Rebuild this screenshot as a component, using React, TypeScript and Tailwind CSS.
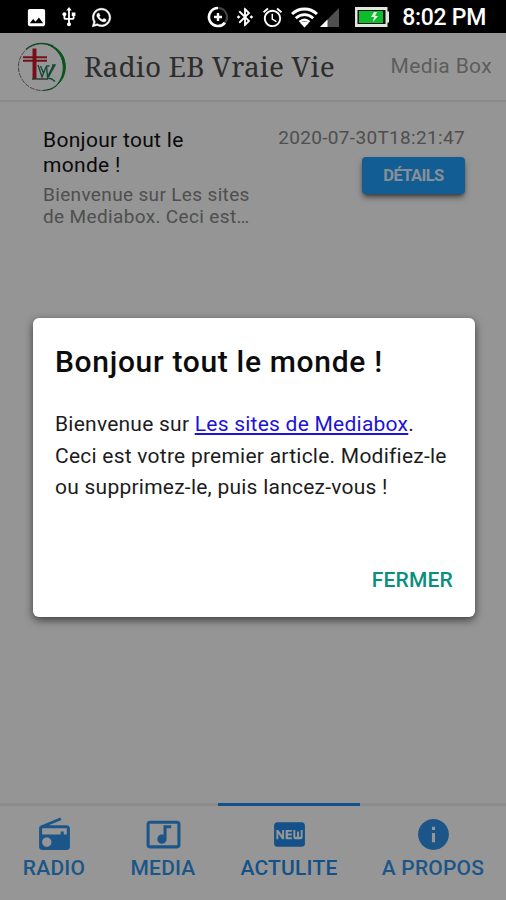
import React from 'react';
import { FaWhatsapp } from 'react-icons/fa';
import {
  MdAlarm,
  MdBluetoothConnected,
  MdFiberNew,
  MdImage,
  MdInfo,
  MdMusicVideo,
  MdRadio,
  MdUsb,
} from 'react-icons/md';

const StatusBar = () => (
  <div className="flex h-[33px] shrink-0 items-center bg-black pr-5 pl-[25px] pt-[1px] text-white">
    <MdImage className="size-[23px]" />
    <MdUsb className="ml-[10px] size-[22px]" />
    <FaWhatsapp className="ml-[11px] size-[21px]" stroke="currentColor" strokeWidth="14" />
    <svg className="ml-[95px] size-[22px]" viewBox="0 0 22 22" fill="none" stroke="currentColor">
      <path d="M11 2a9 9 0 1 0 7 14.6" strokeWidth="2.6" />
      <path d="M11 2a9 9 0 0 1 7 14.6" strokeWidth="2.2" stroke="#444" />
      <path d="M11 7v8M7 11h8" strokeWidth="2.4" />
    </svg>
    <MdBluetoothConnected className="ml-[5px] size-[22px] overflow-visible" />
    <MdAlarm className="ml-[5px] size-[23px]" />
    <svg className="ml-[7px] h-[21px] w-[27px]" viewBox="0 0 27 21" fill="none" stroke="currentColor">
      <path d="M1 7C8 .2 19 .2 26 7" strokeWidth="3" />
      <path d="M4.8 11.3C10 6.5 17 6.5 22.2 11.3" strokeWidth="2.8" />
      <path d="M8.4 14.9C11.5 12.2 15.5 12.2 18.6 14.9" strokeWidth="2.4" />
      <path d="M13.5 20.5L9 15.8c2.4-1.7 6.600-1.7 9 0z" fill="currentColor" stroke="none" />
    </svg>
    <svg className="ml-[2px] size-[19px]" viewBox="0 0 19 19">
      <path d="M19 0v19H0z" fill="#505050" />
      <path d="M7.5 11.5V19H0z" fill="#fff" />
    </svg>
    <svg className="ml-[16px] h-[20px] w-[34px] shrink-0" viewBox="0 0 34 20">
      <path d="M0 0h32.5v4.500h1.500v11h-1.500V20H0z" fill="#e0e6e0" />
      <path d="M2.500 3h28v14h-28z" fill="#111" />
      <path d="M4 4h24v12H4z" fill="#0dbd2b" />
      <path d="M19 5l-3 5h3l-1 5 5-6h-3l2-4z" fill="#e8ffe8" />
    </svg>
    <span className="ml-auto whitespace-nowrap pt-[3px] text-[23px] font-medium tracking-[-0.3px]">8:02 PM</span>
  </div>
);

const Logo = () => (
  <svg className="size-[50px]" viewBox="0 0 50 50" fill="none">
    <path d="M24 1.5a23.5 23.5 0 1 0 2 47" stroke="#777" strokeWidth="1" strokeDasharray="5 1" />
    <path d="M9 7.5C16 1 27-.5 36 4" stroke="#147a3a" strokeWidth="1.5" />
    <path d="M30 2.2C43 5 49 16 48.300 26c-.3 7-3.300 13-9.300 18C45 37 47 30 46 22 45 13 39 6 30 2.2z" fill="#0c8a30" stroke="#0c8a30" />
    <path d="M39 44c-4 3-8 4.500-13 4.500" stroke="#147a3a" strokeWidth="1.2" />
    <path d="M15.500 6.500h4V37h-4z" fill="#c41c2c" />
    <path d="M6 15.300h24M6 18.700h24" stroke="#c41c2c" strokeWidth="2" />
    <path d="M15 37h16" stroke="#4a6a4a" strokeWidth="1.5" />
    <path
      d="M21 23l4 12 4.500-11 1 11 6-12M23.500 24l3 7M29.500 24h3M35 23h3l-6.500 12M30 36.500c4-1 6 1 8 3"
      stroke="#247a5e"
      strokeWidth="1.4"
    />
  </svg>
);

const Header = () => (
  <header className="flex h-[69px] shrink-0 items-center border-b-2 border-[#e6e6e6] bg-[#fbfbfb] pr-[14px] pl-[17px]">
    <Logo />
    <h1 className="-mt-[2px] ml-[17px] whitespace-nowrap font-['Noto_Serif','DejaVu_Serif',serif] text-[28px] tracking-[0.15px] font-stretch-condensed text-[#4c4c4c]">
      Radio EB Vraie Vie
    </h1>
    <span className="ml-auto whitespace-nowrap text-[21px] tracking-[0.35px] text-[#9c9c9c]">Media Box</span>
  </header>
);

const ArticleRow = () => (
  <div className="flex justify-between pt-[25px] pr-[41px] pl-[43px]">
    <div className="w-[215px] pt-[1px]">
      <p className="w-[170px] text-[21px] leading-[25px] tracking-[0.3px] text-[#111]">Bonjour tout le monde !</p>
      <p className="mt-[6px] whitespace-nowrap text-[19px] leading-[22px] tracking-[0.35px] text-[#848484]">
        Bienvenue sur Les sites
        <br />
        de Mediabox. Ceci est…
      </p>
    </div>
    <div className="flex flex-col items-end">
      <span className="whitespace-nowrap text-[19px] leading-[22px] tracking-[0.33px] text-[#848484]">
        2020-07-30T18:21:47
      </span>
      <button className="mt-[8px] h-[37px] w-[103px] rounded bg-[#1e9bf5] pt-[1px] text-[16.5px] font-bold tracking-[-0.6px] text-[#e0eefa] shadow-md shadow-black/50">
        DÉTAILS
      </button>
    </div>
  </div>
);

const BottomTabs = () => (
  <nav className="flex h-[97px] shrink-0 border-t-3 border-[#e9e9e9] bg-[#fbfbfb] text-[21px] font-medium tracking-[0.2px] text-[#3090e4]">
    <div className="flex w-[108px] flex-col items-center pt-[10px]">
      <MdRadio className="size-[37px]" />
      <span className="mt-[1px] leading-[28px]">RADIO</span>
    </div>
    <div className="flex w-[110px] flex-col items-center pt-[10px]">
      <MdMusicVideo className="size-[37px]" />
      <span className="mt-[1px] leading-[28px]">MEDIA</span>
    </div>
    <div className="-mt-[3px] flex w-[142px] flex-col items-center border-t-3 border-[#1e87e5] pt-[10px] text-[#1e87e5]">
      <MdFiberNew className="size-[37px]" />
      <span className="mt-[1px] leading-[28px]">ACTULITE</span>
    </div>
    <div className="flex w-[146px] flex-col items-center pt-[10px]">
      <MdInfo className="size-[37px]" />
      <span className="mt-[1px] leading-[28px]">A PROPOS</span>
    </div>
  </nav>
);

const ArticleDialog = () => (
  <div className="absolute inset-x-0 top-[33px] bottom-0 flex items-start justify-center bg-black/40 pt-[285px]">
    <div className="mr-[-2px] flex h-[299px] w-[442px] flex-col rounded-[6px] bg-white px-[22px] shadow-[0_3px_8px_rgba(0,0,0,0.6)]">
      <h2 className="mt-[24px] whitespace-nowrap text-[30px] leading-[40px] font-medium tracking-[0.68px] text-[#0c0c0c]">
        Bonjour tout le monde !
      </h2>
      <p className="mt-[27px] whitespace-nowrap text-[21px] leading-[31.5px] tracking-[0.24px] text-[#1c1c1c]">
        Bienvenue sur <a className="text-[#1d12d8] underline">Les sites de Mediabox</a>.
        <br />
        Ceci est votre premier article. Modifiez-le
        <br />
        ou supprimez-le, puis lancez-vous !
      </p>
      <button className="mt-auto mb-[23px] self-end text-[21px] leading-[28px] font-medium tracking-[0.2px] text-[#0a8f7c]">
        FERMER
      </button>
    </div>
  </div>
);

export default function App() {
  return (
    <div className="relative flex h-[900px] w-[506px] flex-col overflow-hidden bg-[#f8f8f8] font-['Roboto',sans-serif]">
      <StatusBar />
      <Header />
      <main className="flex-1">
        <ArticleRow />
      </main>
      <BottomTabs />
      <ArticleDialog />
    </div>
  );
}
